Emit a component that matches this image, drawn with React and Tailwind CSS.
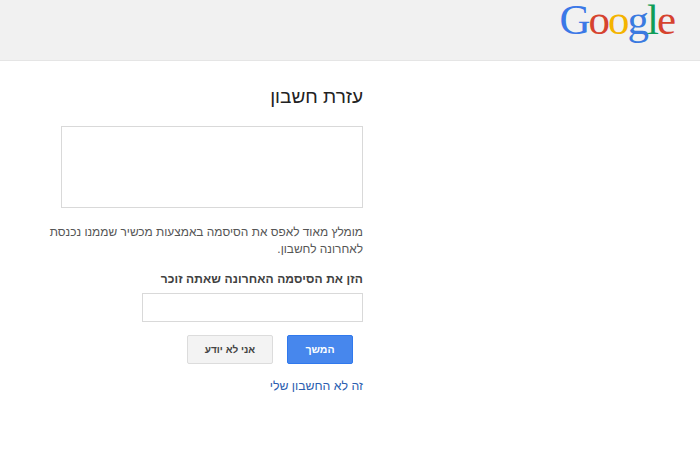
import React from 'react'

const Logo = () => {
  return (
    <div dir="ltr" className="mr-[26px] flex items-baseline font-['Liberation_Serif',serif] text-[43px] leading-[40px] tracking-[-2px]">
      <span className="text-[#3b78e7]">G</span>
      <span className="text-[#d6432f]">o</span>
      <span className="text-[#f4b400]">o</span>
      <span className="text-[#3a7ae0]">g</span>
      <span className="text-[#0f9d58]">l</span>
      <span className="text-[#d6432f]">e</span>
    </div>
  )
}

const App = () => {
  return (
    <div dir="rtl" className="min-h-[467px] bg-white font-['Liberation_Sans',Arial,sans-serif] text-[#404040]">
      {/* Header */}
      <header className="flex h-[61px] items-start justify-start border-b border-[#e5e5e5] bg-[#f1f1f1]">
        <Logo />
      </header>

      {/* Main column */}
      <main className="mr-[337px] w-[320px] pt-[24px]">
        <h1 className="text-[19px] leading-[24px] text-[#222]">עזרת חשבון</h1>

        <div className="mt-[17px] h-[82px] w-[302px] border border-[#d9d9d9]"></div>

        <p className="mt-[16px] text-[11.9px] leading-[17px] text-[#555]">
          מומלץ מאוד לאפס את הסיסמה באמצעות מכשיר שממנו נכנסת לאחרונה לחשבון.
        </p>

        <label className="mt-[13px] block text-[12px] font-bold leading-[17px] tracking-[0.1px] text-[#404040]">
          הזן את הסיסמה האחרונה שאתה זוכר
        </label>

        <input className="mt-[5px] block h-[29px] w-[221px] border border-[#d9d9d9] bg-white outline-none" />

        <div className="mt-[13px] mr-[10px] flex gap-[14px]">
          <button className="h-[29px] w-[66px] rounded-[2px] border border-[#3079ed] bg-[#4787ed] text-[10.5px] font-bold text-white">
            המשך
          </button>
          <button className="h-[29px] w-[86px] rounded-[2px] border border-[#dcdcdc] bg-[#f3f3f3] text-[10px] font-bold text-[#444]">
            אני לא יודע
          </button>
        </div>

        <a className="mt-[13px] block text-[12.3px] leading-[18px] text-[#2a5db0]">זה לא החשבון שלי</a>
      </main>
    </div>
  )
}

export default App
